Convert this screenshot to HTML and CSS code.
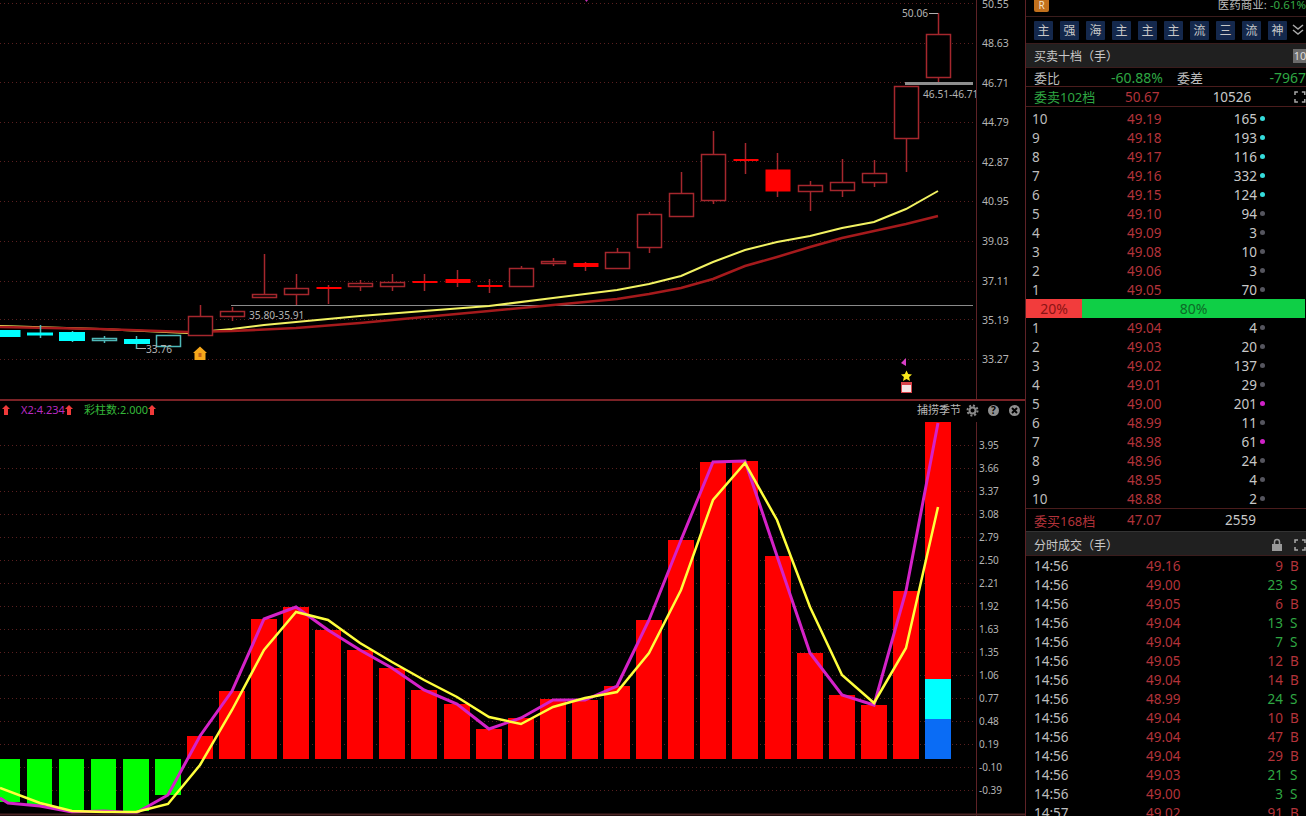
FILE: index.html
```html
<!DOCTYPE html>
<html lang="zh-CN">
<head>
    <meta charset="UTF-8">
    <title>捕捞季节</title>
    <link rel="stylesheet" href="styles.css">
</head>
<body>
    <div id="terminal">
        <div id="charts">
            <!-- K line pane -->
            <svg class="pane" width="1025" height="400" viewBox="0 0 1025 400">
                <g class="grid">
                    <line x1="0" x2="976" y1="3.5" y2="3.5"/><line x1="0" x2="976" y1="43.5" y2="43.5"/>
                    <line x1="0" x2="976" y1="82.5" y2="82.5"/><line x1="0" x2="976" y1="122.5" y2="122.5"/>
                    <line x1="0" x2="976" y1="161.5" y2="161.5"/><line x1="0" x2="976" y1="201.5" y2="201.5"/>
                    <line x1="0" x2="976" y1="241.5" y2="241.5"/><line x1="0" x2="976" y1="281.5" y2="281.5"/>
                    <line x1="0" x2="976" y1="319.5" y2="319.5"/><line x1="0" x2="976" y1="359.5" y2="359.5"/>
                </g>
                <line class="level" x1="231" x2="973" y1="305.5" y2="305.5"/>

                <polyline class="ma-short" points="0,326 100,329 188,333 232,329 264,325 296,322 360,316 424,311 489,306 553,298 617,290 649,284 681,276 713,262 745,250 777,242 810,236 842,228 874,222 906,209 938,191"/>
                <polyline class="ma-long" points="0,327 100,329 188,332 232,331 296,328 360,323 424,317 489,311 553,305 617,299 649,294 681,288 713,279 745,266 777,257 810,247 842,238 874,231 906,224 938,216"/>

                <g class="down">
                    <rect class="solid" x="-5" y="330.5" width="25" height="6"/>
                    <line x1="40.5" x2="40.5" y1="325" y2="338"/><rect class="solid" x="27.5" y="333" width="25" height="2"/>
                    <line x1="72.5" x2="72.5" y1="331" y2="342"/><rect class="solid" x="59.5" y="332.5" width="25" height="8"/>
                    <line x1="104.5" x2="104.5" y1="336" y2="343"/><rect x="92.5" y="338.5" width="24" height="2"/>
                    <line x1="136.5" x2="136.5" y1="336" y2="349"/><rect class="solid" x="124.5" y="339.5" width="25" height="4"/>
                    <rect x="156.5" y="335.5" width="24" height="11"/>
                </g>
                <line class="tick" x1="137" x2="146" y1="348.5" y2="348.5"/>
                <text class="price-note" x="146" y="353">33.76</text>

                <g class="up">
                    <line x1="200.5" x2="200.5" y1="305" y2="316"/><rect x="188.5" y="316.5" width="24" height="19"/>
                    <line x1="232.5" x2="232.5" y1="307" y2="321"/><rect x="220.5" y="311.5" width="24" height="5"/>
                    <line x1="264.5" x2="264.5" y1="254" y2="298"/><rect x="252.5" y="294.5" width="24" height="3"/>
                    <line x1="296.5" x2="296.5" y1="274" y2="305"/><rect x="284.5" y="288.5" width="24" height="6"/>
                    <line x1="328.5" x2="328.5" y1="285" y2="304"/><rect class="solid" x="316.5" y="287" width="25" height="2"/>
                    <line x1="360.5" x2="360.5" y1="280" y2="291"/><rect x="348.5" y="283.5" width="24" height="3"/>
                    <line x1="392.5" x2="392.5" y1="274" y2="291"/><rect x="380.5" y="282.5" width="24" height="4"/>
                    <line x1="424.5" x2="424.5" y1="274" y2="291"/><rect class="solid" x="412.5" y="281" width="25" height="2"/>
                    <line x1="457.5" x2="457.5" y1="270" y2="287"/><rect class="solid" x="445.5" y="279" width="25" height="4"/>
                    <line x1="489.5" x2="489.5" y1="279" y2="293"/><rect class="solid" x="477.5" y="285" width="25" height="2"/>
                    <line x1="521.5" x2="521.5" y1="266" y2="287"/><rect x="509.5" y="268.5" width="24" height="18"/>
                    <line x1="553.5" x2="553.5" y1="258" y2="266"/><rect x="541.5" y="261.5" width="24" height="2"/>
                    <line x1="585.5" x2="585.5" y1="262" y2="271"/><rect class="solid" x="573.5" y="263" width="25" height="4"/>
                    <line x1="617.5" x2="617.5" y1="248" y2="269"/><rect x="605.5" y="252.5" width="24" height="16"/>
                    <line x1="649.5" x2="649.5" y1="212" y2="253"/><rect x="637.5" y="214.5" width="24" height="33"/>
                    <line x1="681.5" x2="681.5" y1="172" y2="217"/><rect x="669.5" y="193.5" width="24" height="23"/>
                    <line x1="713.5" x2="713.5" y1="131" y2="204"/><rect x="701.5" y="154.5" width="24" height="46"/>
                    <line x1="745.5" x2="745.5" y1="143" y2="174"/><rect class="solid" x="733.5" y="159" width="25" height="2"/>
                    <line x1="777.5" x2="777.5" y1="153" y2="197"/><rect class="solid" x="765.5" y="169.5" width="25" height="22"/>
                    <line x1="810.5" x2="810.5" y1="181" y2="211"/><rect x="798.5" y="185.5" width="24" height="6"/>
                    <line x1="842.5" x2="842.5" y1="159" y2="197"/><rect x="830.5" y="182.5" width="24" height="8"/>
                    <line x1="874.5" x2="874.5" y1="160" y2="187"/><rect x="862.5" y="173.5" width="24" height="9"/>
                    <line x1="906.5" x2="906.5" y1="86" y2="172"/><rect x="894.5" y="86.5" width="24" height="52"/>
                    <line x1="938.5" x2="938.5" y1="13" y2="82"/><rect x="926.5" y="34.5" width="24" height="43"/>
                </g>

                <rect class="level-bar" x="905" y="82" width="68" height="3"/>
                <line class="tick" x1="929" x2="938" y1="13.5" y2="13.5"/>
                <text class="price-note" x="902" y="17">50.06</text>
                <text class="price-note" x="923" y="98">46.51-46.71</text>
                <text class="price-note" x="249" y="319">35.80-35.91</text>

                <!-- signal marks -->
                <path class="mark-house" d="M200 346.500l7 6.500h-1.500v7h-11v-7H193z"/>
                <rect class="mark-house-door" x="198.500" y="353" width="3" height="4"/>
                <path class="mark-flag" d="M906 358v8l-5-3z"/>
                <path class="mark-star" d="M906.500 370.500l1.700 3.600 3.800.4-2.900 2.600.9 3.900-3.500-2-3.500 2 .9-3.900-2.900-2.600 3.800-.4z"/>
                <rect class="mark-box" x="901" y="382" width="11" height="11"/>
                <rect class="mark-box-inner" x="902" y="385" width="9" height="7"/>
                <path class="mark-tip" d="M585 0h3l-1.500 2z"/>

                <rect class="axis-mask" x="976" y="0" width="49" height="400"/>
                <line class="axis-line" x1="976.500" x2="976.500" y1="0" y2="400"/>
                <g class="axis">
                    <text x="982" y="8">50.55</text><text x="982" y="47">48.63</text>
                    <text x="982" y="87">46.71</text><text x="982" y="126">44.79</text>
                    <text x="982" y="166">42.87</text><text x="982" y="205">40.95</text>
                    <text x="982" y="245">39.03</text><text x="982" y="285">37.11</text>
                    <text x="982" y="324">35.19</text><text x="982" y="363">33.27</text>
                </g>
            </svg>

            <!-- indicator pane -->
            <svg class="pane" width="1025" height="416" viewBox="0 400 1025 416">
                <g class="grid">
                    <line x1="0" x2="976" y1="445.500" y2="445.500"/><line x1="0" x2="976" y1="468.500" y2="468.500"/>
                    <line x1="0" x2="976" y1="491.500" y2="491.500"/><line x1="0" x2="976" y1="514.500" y2="514.500"/>
                    <line x1="0" x2="976" y1="537.500" y2="537.500"/><line x1="0" x2="976" y1="560.500" y2="560.500"/>
                    <line x1="0" x2="976" y1="583.500" y2="583.500"/><line x1="0" x2="976" y1="606.500" y2="606.500"/>
                    <line x1="0" x2="976" y1="629.500" y2="629.500"/><line x1="0" x2="976" y1="652.500" y2="652.500"/>
                    <line x1="0" x2="976" y1="675.500" y2="675.500"/><line x1="0" x2="976" y1="698.500" y2="698.500"/>
                    <line x1="0" x2="976" y1="721.500" y2="721.500"/><line x1="0" x2="976" y1="744.500" y2="744.500"/>
                    <line x1="0" x2="976" y1="767.500" y2="767.500"/><line x1="0" x2="976" y1="790.500" y2="790.500"/>
                </g>

                <g class="bar-green">
                    <rect x="-5" y="759" width="25" height="43"/><rect x="27" y="759" width="25" height="46"/>
                    <rect x="59" y="759" width="25" height="52"/><rect x="91" y="759" width="25" height="52"/>
                    <rect x="123" y="759" width="26" height="52"/><rect x="155" y="759" width="26" height="36"/>
                </g>
                <g class="bar-red">
                    <rect x="187" y="736" width="26" height="23"/><rect x="219" y="691" width="26" height="68"/>
                    <rect x="251" y="619" width="26" height="140"/><rect x="283" y="607" width="26" height="152"/>
                    <rect x="315" y="630" width="26" height="129"/><rect x="347" y="650" width="26" height="109"/>
                    <rect x="379" y="668" width="26" height="91"/><rect x="411" y="690" width="26" height="69"/>
                    <rect x="444" y="704" width="26" height="55"/><rect x="476" y="729" width="26" height="30"/>
                    <rect x="508" y="718" width="26" height="41"/><rect x="540" y="699" width="26" height="60"/>
                    <rect x="572" y="700" width="26" height="59"/><rect x="604" y="686" width="26" height="73"/>
                    <rect x="636" y="620" width="26" height="139"/><rect x="668" y="540" width="26" height="219"/>
                    <rect x="700" y="462" width="26" height="297"/><rect x="732" y="461" width="26" height="298"/>
                    <rect x="765" y="556" width="26" height="203"/><rect x="797" y="653" width="26" height="106"/>
                    <rect x="829" y="695" width="26" height="64"/><rect x="861" y="705" width="26" height="54"/>
                    <rect x="893" y="591" width="26" height="168"/><rect x="925" y="422" width="26" height="257"/>
                </g>
                <rect class="bar-cyan" x="925" y="679" width="26" height="40"/>
                <rect class="bar-blue" x="925" y="719" width="26" height="40"/>

                <polyline class="line-x2" points="0,798 8,803 40,806 72,812 104,811 136,813 168,795 200,736 232,691 264,619 296,607 328,630 360,650 392,668 424,690 457,704 489,729 521,718 553,700 585,700 617,686 649,620 681,540 713,462 745,461 777,556 810,653 842,695 874,705 906,591 938,423"/>
                <polyline class="line-x1" points="0,788 40,803 72,811 104,812 136,812 168,804 200,765 232,710 264,650 296,612 328,620 360,643 392,662 424,680 457,697 489,717 521,724 553,707 585,698 617,692 649,653 681,590 713,500 745,463 777,520 810,607 842,675 874,703 906,648 938,507"/>

                <rect class="pane-head" x="0" y="402" width="976" height="19"/>
                <path class="arrow" d="M6 405l4 4h-2v6H4v-6H2z"/>
                <text class="legend legend-x2" x="21" y="414">X2:4.234</text>
                <path class="arrow" d="M69 405l4 4h-2v6h-4v-6h-2z"/>
                <text class="legend legend-bars" x="84" y="414">彩柱数:2.000</text>
                <path class="arrow" d="M152 405l4 4h-2v6h-4v-6h-2z"/>
                <text class="legend legend-name" x="917" y="414">捕捞季节</text>

                <circle class="gear-teeth" cx="972.500" cy="410.500" r="5"/>
                <circle class="gear-ring" cx="972.500" cy="410.500" r="3"/>
                <circle class="head-fill" cx="993.500" cy="410.500" r="5.500"/>
                <text class="head-glyph" x="993.500" y="414">?</text>
                <circle class="head-fill" cx="1014.500" cy="410.500" r="5.500"/>
                <path class="head-cross" d="M1012 408l5 5m0-5l-5 5"/>

                <rect class="axis-mask" x="976" y="422" width="49" height="394"/>
                <line class="axis-line" x1="976.500" x2="976.500" y1="422" y2="816"/>
                <g class="axis axis-small">
                    <text x="979" y="449">3.95</text><text x="979" y="472">3.66</text>
                    <text x="979" y="495">3.37</text><text x="979" y="518">3.08</text>
                    <text x="979" y="541">2.79</text><text x="979" y="564">2.50</text>
                    <text x="979" y="587">2.21</text><text x="979" y="610">1.92</text>
                    <text x="979" y="633">1.63</text><text x="979" y="656">1.35</text>
                    <text x="979" y="679">1.06</text><text x="979" y="702">0.77</text>
                    <text x="979" y="725">0.48</text><text x="979" y="748">0.19</text>
                    <text x="979" y="771">-0.10</text><text x="979" y="794">-0.39</text>
                </g>
                <line class="pane-foot" x1="0" x2="1025" y1="814.500" y2="814.500"/>
            </svg>
        </div>

        <aside id="side">
            <div class="index-bar">
                <span class="badge-r">R</span>
                <span class="sector">医药商业: <em>-0.61%</em></span>
            </div>
            <div class="tags">
                <span class="tag">主</span><span class="tag">强</span><span class="tag">海</span><span class="tag">主</span><span class="tag">主</span><span class="tag">主</span><span class="tag">流</span><span class="tag">三</span><span class="tag">流</span><span class="tag">神</span>
                <svg class="more" width="12" height="14" viewBox="0 0 12 14"><path d="M1 2l5 4 5-4M1 7l5 4 5-4"/></svg>
            </div>

            <div class="section-head">
                <span>买卖十档（手）</span>
                <span class="head-num">10</span>
            </div>
            <div class="ratio-row">
                <span class="name">委比</span><span class="ratio-val">-60.88%</span>
                <span class="name name-diff">委差</span><span class="diff-val">-7967</span>
            </div>
            <div class="sum-row">
                <span class="sum-name green">委卖102档</span><span class="sum-price">50.67</span><span class="sum-vol">10526</span>
                <svg class="full" width="12" height="12" viewBox="0 0 12 12"><path d="M1 4V1h3M8 1h3v3M11 8v3H8M4 11H1V8"/></svg>
            </div>

            <ul class="book book-sell">
                <li><span>10</span><span class="price">49.19</span><span class="vol">165</span><i class="dot cyan"></i></li>
                <li><span>9</span><span class="price">49.18</span><span class="vol">193</span><i class="dot cyan"></i></li>
                <li><span>8</span><span class="price">49.17</span><span class="vol">116</span><i class="dot cyan"></i></li>
                <li><span>7</span><span class="price">49.16</span><span class="vol">332</span><i class="dot cyan"></i></li>
                <li><span>6</span><span class="price">49.15</span><span class="vol">124</span><i class="dot cyan"></i></li>
                <li><span>5</span><span class="price">49.10</span><span class="vol">94</span><i class="dot"></i></li>
                <li><span>4</span><span class="price">49.09</span><span class="vol">3</span><i class="dot"></i></li>
                <li><span>3</span><span class="price">49.08</span><span class="vol">10</span><i class="dot"></i></li>
                <li><span>2</span><span class="price">49.06</span><span class="vol">3</span><i class="dot"></i></li>
                <li><span>1</span><span class="price">49.05</span><span class="vol">70</span><i class="dot"></i></li>
            </ul>

            <div class="split">
                <span class="split-sell">20%</span>
                <span class="split-buy">80%</span>
            </div>

            <ul class="book">
                <li><span>1</span><span class="price">49.04</span><span class="vol">4</span><i class="dot"></i></li>
                <li><span>2</span><span class="price">49.03</span><span class="vol">20</span><i class="dot"></i></li>
                <li><span>3</span><span class="price">49.02</span><span class="vol">137</span><i class="dot"></i></li>
                <li><span>4</span><span class="price">49.01</span><span class="vol">29</span><i class="dot"></i></li>
                <li><span>5</span><span class="price">49.00</span><span class="vol">201</span><i class="dot pink"></i></li>
                <li><span>6</span><span class="price">48.99</span><span class="vol">11</span><i class="dot"></i></li>
                <li><span>7</span><span class="price">48.98</span><span class="vol">61</span><i class="dot pink"></i></li>
                <li><span>8</span><span class="price">48.96</span><span class="vol">24</span><i class="dot"></i></li>
                <li><span>9</span><span class="price">48.95</span><span class="vol">4</span><i class="dot"></i></li>
                <li><span>10</span><span class="price">48.88</span><span class="vol">2</span><i class="dot"></i></li>
            </ul>

            <div class="sum-row sum-buy">
                <span class="sum-name red">委买168档</span><span class="sum-price">47.07</span><span class="sum-vol">2559</span>
            </div>

            <div class="section-head section-trades">
                <span>分时成交（手）</span>
                <span class="head-tools">
                    <svg class="lock" width="12" height="14" viewBox="0 0 12 14"><path class="lock-arc" d="M3.500 6V4a2.500 2.500 0 0 1 5 0v2"/><rect x="1" y="6" width="10" height="7"/></svg>
                    <svg class="full" width="12" height="12" viewBox="0 0 12 12"><path d="M1 4V1h3M8 1h3v3M11 8v3H8M4 11H1V8"/></svg>
                </span>
            </div>

            <ul class="trades">
                <li><span>14:56</span><span class="price">49.16</span><span class="vol red">9</span><span class="red">B</span></li>
                <li><span>14:56</span><span class="price">49.00</span><span class="vol green">23</span><span class="green">S</span></li>
                <li><span>14:56</span><span class="price">49.05</span><span class="vol red">6</span><span class="red">B</span></li>
                <li><span>14:56</span><span class="price">49.04</span><span class="vol green">13</span><span class="green">S</span></li>
                <li><span>14:56</span><span class="price">49.04</span><span class="vol green">7</span><span class="green">S</span></li>
                <li><span>14:56</span><span class="price">49.05</span><span class="vol red">12</span><span class="red">B</span></li>
                <li><span>14:56</span><span class="price">49.04</span><span class="vol red">14</span><span class="red">B</span></li>
                <li><span>14:56</span><span class="price">48.99</span><span class="vol green">24</span><span class="green">S</span></li>
                <li><span>14:56</span><span class="price">49.04</span><span class="vol red">10</span><span class="red">B</span></li>
                <li><span>14:56</span><span class="price">49.04</span><span class="vol red">47</span><span class="red">B</span></li>
                <li><span>14:56</span><span class="price">49.04</span><span class="vol red">29</span><span class="red">B</span></li>
                <li><span>14:56</span><span class="price">49.03</span><span class="vol green">21</span><span class="green">S</span></li>
                <li><span>14:56</span><span class="price">49.00</span><span class="vol green">3</span><span class="green">S</span></li>
                <li><span>14:57</span><span class="price">49.02</span><span class="vol red">91</span><span class="red">B</span></li>
            </ul>
        </aside>
    </div>
</body>
</html>
```

FILE: styles.css
```css
* {
    box-sizing: border-box;
}

html, body {
    margin: 0;
    padding: 0;
    height: 100%;
    overflow: hidden;
    background-color: #000;
}

body {
    font-family: "Noto Sans", "Noto Sans CJK SC", sans-serif;
    font-size: 13.5px;
    color: #bdbdbd;
}

#terminal {
    display: flex;
    width: 1306px;
    height: 816px;
}

#charts {
    position: relative;
    width: 1025px;
    flex-shrink: 0;
    display: flex;
    flex-direction: column;
}

/* the pane divider sits on top of both charts */
#charts::after {
    content: "";
    position: absolute;
    left: 0;
    top: 399px;
    width: 1025px;
    height: 2px;
    background-color: #7a2226;
}

.pane {
    display: block;
    flex-shrink: 0;
}

.grid line {
    stroke: #5a1f1f;
    stroke-width: 1;
    stroke-dasharray: 1 3;
}

.level {
    stroke: #8a8a8a;
    stroke-width: 1;
}

.level-bar {
    fill: #8e8e8e;
}

.tick {
    stroke: #b0b0b0;
    stroke-width: 1;
}

.price-note {
    font-size: 10.2px;
    fill: #b4b4b4;
}

.ma-short {
    fill: none;
    stroke: #f2f262;
    stroke-width: 2;
}

.ma-long {
    fill: none;
    stroke: #a51a1c;
    stroke-width: 2.5;
}

.up line, .up rect {
    stroke: #a5272d;
    stroke-width: 1.5;
}

.up rect {
    fill: #000;
}

.up rect.solid {
    fill: #f00;
    stroke: none;
}

.down line, .down rect {
    stroke: #4fb8b8;
    stroke-width: 1.5;
}

.down rect {
    fill: #000;
}

.down rect.solid {
    fill: #0ff;
    stroke: #0ff;
    stroke-width: 1;
}

.mark-house {
    fill: #f7a81b;
}

.mark-house-door {
    fill: #c4621a;
}

.mark-flag {
    fill: #d93fc8;
}

.mark-star {
    fill: #f8e71c;
}

.mark-box {
    fill: #d8434a;
}

.mark-box-inner {
    fill: #f6e6e6;
}

.mark-tip {
    fill: #c02fb0;
}

.axis-mask {
    fill: #000;
}

.axis-line {
    stroke: #5e2226;
    stroke-width: 1;
}

.axis text {
    font-size: 10.5px;
    fill: #b4b4b4;
}

.axis-small text {
    font-size: 10px;
}

.bar-green rect {
    fill: #0f0;
}

.bar-red rect {
    fill: #f00;
}

.bar-cyan {
    fill: #0ff;
}

.bar-blue {
    fill: #0a6cf5;
}

.line-x1, .line-x2 {
    fill: none;
}

.line-x1 {
    stroke: #ffff3c;
    stroke-width: 2.5;
}

.line-x2 {
    stroke: #d422c8;
    stroke-width: 3;
}

.pane-head {
    fill: #000;
}

.arrow {
    fill: #f03a3a;
}

.legend {
    font-size: 11px;
}

.legend-x2 {
    fill: #b82bc0;
}

.legend-bars {
    fill: #35b83a;
}

.legend-name {
    fill: #b8b8b8;
}

.gear-teeth {
    fill: none;
    stroke: #8a8a8a;
    stroke-width: 2;
    stroke-dasharray: 2 1.9;
}

.gear-ring {
    fill: none;
    stroke: #8a8a8a;
    stroke-width: 2;
}

.head-fill {
    fill: #8f8f8f;
}

.head-glyph {
    font-size: 10px;
    font-weight: bold;
    text-anchor: middle;
    fill: #000;
}

.head-cross {
    fill: none;
    stroke: #000;
    stroke-width: 2;
}

.pane-foot {
    stroke: #4a2424;
    stroke-width: 2;
}

#side {
    width: 281px;
    flex-shrink: 0;
    border-left: 1px solid #5e2226;
    overflow: hidden;
}

.index-bar {
    height: 17px;
    display: flex;
    justify-content: space-between;
    align-items: flex-start;
    padding-left: 8px;
    border-bottom: 1px solid #3a1c1c;
    overflow: hidden;
}

.badge-r {
    width: 15px;
    height: 12px;
    background-color: #c2701c;
    color: #f3e3c8;
    border-radius: 0 0 2px 2px;
    font-size: 10px;
    line-height: 11px;
    text-align: center;
}

.sector {
    font-size: 11.5px;
    line-height: 10px;
    white-space: nowrap;
}

.sector em {
    font-style: normal;
    color: #36a845;
}

.tags {
    height: 27px;
    display: flex;
    align-items: center;
    gap: 7px;
    padding-left: 8px;
    border-bottom: 1px solid #3a1c1c;
}

.tag {
    width: 19px;
    height: 19px;
    background-color: #14284c;
    color: #c8c8c8;
    border-radius: 1px;
    font-size: 12px;
    line-height: 19px;
    text-align: center;
    flex-shrink: 0;
}

.more {
    margin-left: -2px;
}

.more path, .full path {
    fill: none;
    stroke: #a8a8a8;
    stroke-width: 1.5;
}

.section-head {
    height: 24px;
    display: flex;
    align-items: center;
    justify-content: space-between;
    padding-left: 8px;
    background-color: #202020;
    border-bottom: 1px solid #3a1c1c;
    color: #c8c8c8;
    font-size: 12px;
}

.section-trades {
    padding-top: 2px;
}

.head-num {
    width: 14px;
    height: 14px;
    margin-right: -1px;
    background-color: #6b6b6b;
    color: #ddd;
    font-size: 11px;
    line-height: 14px;
    text-align: center;
    overflow: hidden;
}

.ratio-row {
    height: 19px;
    display: grid;
    grid-template-columns: 30px 99px 44px 1fr;
    align-items: center;
    padding: 0 0 2px 8px;
    border-bottom: 1px solid #4a1c1c;
    font-size: 14px;
}

.name {
    font-size: 13px;
}

.name-diff {
    padding-left: 14px;
}

.ratio-val, .diff-val {
    color: #2fa743;
    text-align: right;
}

.sum-row {
    height: 20px;
    display: flex;
    align-items: center;
    padding-left: 8px;
    border-bottom: 1px solid #4a1c1c;
}

.sum-name {
    width: 93px;
    font-size: 13px;
    white-space: nowrap;
}

.sum-price {
    width: 60px;
    color: #b3333a;
}

.sum-vol {
    width: 69px;
    text-align: right;
    color: #c8c8c8;
}

.sum-row .full {
    margin-left: 43px;
}

.sum-buy {
    height: 24px;
    border-top: 1px solid #4a1c1c;
    border-bottom: 1px solid #333;
}

.green {
    color: #2fa743;
}

.red {
    color: #b3333a;
}

.book, .trades {
    list-style-type: none;
    margin: 0;
    padding: 0;
}

.book-sell {
    padding-top: 2px;
}

.book li {
    height: 19px;
    display: flex;
    align-items: center;
    padding-left: 6px;
}

.book li span:first-child {
    width: 95px;
}

.book .price {
    width: 60px;
    color: #b3333a;
}

.book .vol {
    width: 70px;
    text-align: right;
    color: #c8c8c8;
}

.dot {
    width: 5px;
    height: 5px;
    margin-left: 3px;
    border-radius: 50%;
    background-color: #55555e;
}

.dot.cyan {
    background-color: #35dcdc;
}

.dot.pink {
    background-color: #d022c8;
}

.split {
    height: 19px;
    display: flex;
    margin-right: 1px;
    font-size: 14px;
    line-height: 19px;
    text-align: center;
}

.split-sell {
    width: 56px;
    background-color: #f23c3c;
    color: #8a1414;
}

.split-buy {
    flex-grow: 1;
    background-color: #0fcf46;
    color: #0d6a27;
}

.head-tools {
    display: flex;
    align-items: center;
    gap: 11px;
}

.lock rect {
    fill: #9a9a9a;
}

.lock-arc {
    fill: none;
    stroke: #9a9a9a;
    stroke-width: 1.5;
}

.trades li {
    height: 19px;
    display: flex;
    align-items: center;
    padding-left: 8px;
}

.trades li span:first-child {
    width: 112px;
}

.trades .price {
    width: 60px;
    color: #b3333a;
}

.trades .vol {
    width: 77px;
    text-align: right;
    margin-right: 7px;
}
```
